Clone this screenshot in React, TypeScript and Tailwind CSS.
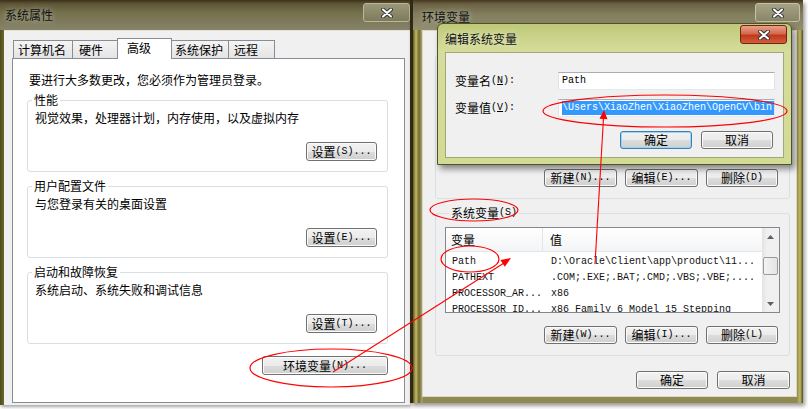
import React from "react";

function M({ children }: { children: React.ReactNode }) {
  return <span className="font-['Liberation_Mono',monospace] text-[10px] leading-none">{children}</span>;
}

function CloseGlyph() {
  return (
    <svg width="12" height="10" viewBox="0 0 12 10">
      <path d="M2 1.5l8 7M10 1.5l-8 7" stroke="#3a3a3a" strokeWidth="4" strokeLinecap="round" />
      <path d="M2 1.5l8 7M10 1.5l-8 7" stroke="#ffffff" strokeWidth="2" strokeLinecap="round" />
    </svg>
  );
}

function Btn({
  children,
  className = "",
  primary = false,
}: {
  children: React.ReactNode;
  className?: string;
  primary?: boolean;
}) {
  const skin = primary
    ? "border-[#3c7fb1] shadow-[inset_0_0_0_1px_#98d6f5]"
    : "border-[#707070] shadow-[inset_0_0_0_1px_#fbfbfb]";
  return (
    <div
      className={`flex items-center justify-center rounded-[3px] border bg-[linear-gradient(180deg,#f2f2f2,#ebebeb_50%,#dddddd_50%,#cfcfcf)] leading-none ${skin} ${className}`}
    >
      {children}
    </div>
  );
}

function Group({ label, className = "", children }: { label: React.ReactNode; className?: string; children: React.ReactNode }) {
  return (
    <fieldset className={`rounded-[3px] border border-[#d5dfe5] ${className}`}>
      <legend className="ml-[4px] flex h-[16px] items-center px-[2px] leading-[16px]">{label}</legend>
      {children}
    </fieldset>
  );
}

function SettingsGroup({ label, desc, btn, className }: { label: string; desc: string; btn: React.ReactNode; className: string }) {
  return (
    <Group label={label} className={className}>
      <p className="mt-[2px] pl-[7px] leading-[16px]">{desc}</p>
      <div className="mt-[16px] flex justify-end pr-[10px] pb-[10px]">
        <Btn className="h-[19px] w-[71px]">{btn}</Btn>
      </div>
    </Group>
  );
}

function SystemProps() {
  return (
    <div className="flex h-[405px] w-[410px] flex-col shadow-[1px_2px_3px_rgba(0,0,0,0.35)]">
      <div className="flex h-[30px] items-start justify-between bg-[linear-gradient(180deg,#3e2f18,#5e5737_4px,#76724f_14px,#868369)]">
        <span className="mt-[7px] pl-[5px] leading-[16px] text-[#111] [text-shadow:0_0_6px_rgba(255,255,255,0.55)]">系统属性</span>
        <div className="mt-[3px] flex h-[19px] w-[47px] items-center justify-center rounded-[3px] border border-[#b9b79b] bg-[linear-gradient(180deg,#9a977a,#7e7b5c)]">
          <CloseGlyph />
        </div>
      </div>
      <div className="flex flex-1">
        <div className="w-[4px] bg-[linear-gradient(90deg,#4d4b1a,#6b6a2c)]" />
        <div className="flex flex-1 flex-col border-t border-[#e4e3d6] bg-[#f0f0f0] pt-[7px] pr-[5px] pb-[2px] pl-[8px]">
          <div className="flex h-[20px] items-end">
            <div className="ml-[1px] flex h-[18px] w-[60px] items-center border border-b-0 border-[#898c95] bg-[linear-gradient(180deg,#f4f4f4,#e4e4e4)] pl-[4px] leading-[16px]">计算机名</div>
            <div className="-ml-px flex h-[18px] w-[47px] items-center border border-b-0 border-[#898c95] bg-[linear-gradient(180deg,#f4f4f4,#e4e4e4)] pl-[6px] leading-[16px]">硬件</div>
            <div className="relative z-10 -mb-px -ml-[2px] h-[21px] w-[55px] border border-b-0 border-[#898c95] bg-white pt-[1px] pl-[9px] leading-[16px]">高级</div>
            <div className="-ml-[2px] flex h-[18px] w-[59px] items-center border border-b-0 border-[#898c95] bg-[linear-gradient(180deg,#f4f4f4,#e4e4e4)] pl-[4px] leading-[16px]">系统保护</div>
            <div className="-ml-px flex h-[18px] w-[47px] items-center border border-b-0 border-[#898c95] bg-[linear-gradient(180deg,#f4f4f4,#e4e4e4)] pl-[5px] leading-[16px]">远程</div>
          </div>
          <div className="flex flex-1 flex-col border border-[#898c95] bg-white pt-[13px] pr-[16px] pl-[14px]">
            <p className="pl-[2px] leading-[16px]">要进行大多数更改，您必须作为管理员登录。</p>
            <SettingsGroup
              className="mt-[4px]"
              label="性能"
              desc="视觉效果，处理器计划，内存使用，以及虚拟内存"
              btn={<>设置<M>(S)...</M></>}
            />
            <SettingsGroup
              className="mt-[6px]"
              label="用户配置文件"
              desc="与您登录有关的桌面设置"
              btn={<>设置<M>(E)...</M></>}
            />
            <SettingsGroup
              className="mt-[6px]"
              label="启动和故障恢复"
              desc="系统启动、系统失败和调试信息"
              btn={<>设置<M>(T)...</M></>}
            />
            <div className="mt-[12px] flex justify-end">
              <Btn className="h-[19px] w-[126px]">环境变量<M>(N)...</M></Btn>
            </div>
          </div>
        </div>
      </div>
    </div>
  );
}

const sysRows = [
  ["Path", "D:\\Oracle\\Client\\app\\product\\11..."],
  ["PATHEXT", ".COM;.EXE;.BAT;.CMD;.VBS;.VBE;...."],
  ["PROCESSOR_AR...", "x86"],
  ["PROCESSOR_ID...", "x86 Family 6 Model 15 Stepping"],
];

function VarList({ rows }: { rows: string[][] }) {
  return (
    <div className="mt-[6px] flex h-[86px] border border-[#828790] bg-white">
      <div className="flex-1 overflow-hidden">
        <div className="flex h-[24px] items-center border-b border-[#e5e5e5] bg-[linear-gradient(180deg,#ffffff,#f3f4f6)]">
          <div className="flex h-full w-[97px] items-center border-r border-[#e5e5e5] pl-[5px] leading-[16px]">变量</div>
          <div className="pl-[7px] leading-[16px]">值</div>
        </div>
        <div className="pt-[2px]">
          {rows.map(([k, v]) => (
            <div key={k} className="flex h-[16px] items-center font-['Liberation_Mono',monospace] text-[10px] leading-[16px] text-[#111]">
              <div className="w-[97px] pl-[6px] whitespace-nowrap">{k}</div>
              <div className="pl-[8px] whitespace-nowrap">{v}</div>
            </div>
          ))}
        </div>
      </div>
      <div className="flex w-[17px] flex-col bg-[linear-gradient(90deg,#e3e3e3,#f0f0f0_30%,#f0f0f0)]">
        <div className="flex h-[17px] items-center justify-center">
          <svg width="7" height="4" viewBox="0 0 7 4"><path d="M0 4L3.5 0L7 4z" fill="#606060" /></svg>
        </div>
        {rows.length > 0 && (
          <div className="mx-[1px] mt-[12px] h-[18px] rounded-[2px] border border-[#9a9a9a] bg-[linear-gradient(90deg,#f3f3f3,#e4e4e4)]" />
        )}
        <div className="flex-1" />
        <div className="flex h-[17px] items-center justify-center">
          <svg width="7" height="4" viewBox="0 0 7 4"><path d="M0 0L3.5 4L7 0z" fill="#606060" /></svg>
        </div>
      </div>
    </div>
  );
}

function VarGroup({ label, rows, btns, className }: { label: React.ReactNode; rows: string[][]; btns: React.ReactNode[]; className: string }) {
  return (
    <Group label={label} className={`px-[9px] pb-[11px] ${className}`}>
      <VarList rows={rows} />
      <div className="mt-[13px] mr-[2px] flex justify-end gap-[8px]">
        <Btn className="h-[18px] w-[73px]">{btns[0]}</Btn>
        <Btn className="h-[18px] w-[73px]">{btns[1]}</Btn>
        <Btn className="h-[18px] w-[72px]">{btns[2]}</Btn>
      </div>
    </Group>
  );
}

function EditDialog() {
  return (
    <div className="absolute top-[23px] left-[24px] flex h-[142px] w-[355px] flex-col rounded-t-[6px] border border-[#4f5328] bg-[linear-gradient(180deg,#bfc978,#d6dd9c_28px,#d2da94)] shadow-[3px_4px_6px_rgba(0,0,0,0.45)]">
      <div className="flex h-[28px] items-start justify-between">
        <span className="mt-[7px] pl-[7px] leading-[16px] text-[#111] [text-shadow:0_0_6px_rgba(255,255,255,0.7)]">编辑系统变量</span>
        <div className="mt-[1px] mr-[4px] flex h-[19px] w-[47px] items-center justify-center rounded-[3px] border border-[#6e2416] bg-[linear-gradient(180deg,#e9a08c,#d46a4e_45%,#c0391c_55%,#d75d3a)]">
          <CloseGlyph />
        </div>
      </div>
      <div className="mx-[7px] mb-[6px] flex flex-1 flex-col border border-[#a2a873] bg-[#f0f0f0] pt-[19px] pr-[8px] pl-[9px]">
        <div className="flex h-[18px] items-center">
          <div className="flex w-[103px] items-center leading-[16px]">变量名<M>(<u>N</u>):</M></div>
          <div className="flex h-[18px] flex-1 items-center border border-[#abadb3] border-x-[#e2e3ea] border-b-[#e3e9ef] bg-white pl-[3px]">
            <M>Path</M>
          </div>
        </div>
        <div className="mt-[9px] flex h-[18px] items-center">
          <div className="flex w-[103px] items-center leading-[16px]">变量值<M>(<u>V</u>):</M></div>
          <div className="flex h-[18px] flex-1 items-center overflow-hidden border border-[#abadb3] border-x-[#e2e3ea] border-b-[#e3e9ef] bg-white pl-[3px]">
            <span className="flex h-[14px] flex-1 items-center bg-[#3399ff] whitespace-nowrap text-white">
              <M>\Users\XiaoZhen\XiaoZhen\OpenCV\bin</M>
            </span>
          </div>
        </div>
        <div className="mt-[14px] mr-[2px] flex justify-end gap-[9px]">
          <Btn primary className="h-[18px] w-[72px]">确定</Btn>
          <Btn className="h-[18px] w-[72px]">取消</Btn>
        </div>
      </div>
    </div>
  );
}

function EnvVars() {
  return (
    <div className="relative flex h-[403px] w-[393px] flex-col border-l-[3px] border-[#2f2a16] shadow-[2px_3px_4px_rgba(0,0,0,0.4)]">
      <div className="flex h-[30px] items-start justify-between bg-[linear-gradient(180deg,#46361e,#6a6244_4px,#827d5c_14px,#948f72)]">
        <span className="mt-[9px] pl-[9px] leading-[16px] text-[#111] [text-shadow:0_0_6px_rgba(255,255,255,0.55)]">环境变量</span>
        <div className="mt-[3px] mr-[3px] flex h-[19px] w-[45px] items-center justify-center rounded-[3px] border border-[#c3c1a6] bg-[linear-gradient(180deg,#a4a185,#8a8768)]">
          <CloseGlyph />
        </div>
      </div>
      <div className="flex flex-1 bg-[linear-gradient(90deg,#5a5520,#c4b964_3px,#6f6a2c_6px,#a9a478_9px,#8f8a52_10px,#8f8a52_calc(100%-6px),#c4b964_calc(100%-3px),#4f4a1c)] pr-[6px] pb-[6px] pl-[9px]">
        <div className="flex flex-1 flex-col border border-[#dcd9bd] bg-[#f0f0f0] pt-[17px] pr-[6px] pl-[12px]">
          <VarGroup
            className=""
            label={<>用户变量<M>(U)</M></>}
            rows={[]}
            btns={[<>新建<M>(N)...</M></>, <>编辑<M>(E)...</M></>, <>删除<M>(D)</M></>]}
          />
          <VarGroup
            className="mt-[6px]"
            label={<>系统变量<M>(S)</M></>}
            rows={sysRows}
            btns={[<>新建<M>(W)...</M></>, <>编辑<M>(I)...</M></>, <>删除<M>(L)</M></>]}
          />
          <div className="mt-[15px] flex justify-end gap-[9px]">
            <Btn className="h-[18px] w-[72px]">确定</Btn>
            <Btn className="h-[18px] w-[73px]">取消</Btn>
          </div>
        </div>
      </div>
      <EditDialog />
    </div>
  );
}

export default function App() {
  return (
    <div className="relative flex h-[409px] w-[808px] overflow-hidden bg-white font-['Noto_Sans_CJK_SC',sans-serif] text-[12px] text-black">
      <SystemProps />
      <EnvVars />
      <svg className="pointer-events-none absolute inset-0" width="808" height="409" viewBox="0 0 808 409" fill="none">
        <ellipse cx="331" cy="368" rx="81" ry="19" stroke="#ff0000" strokeWidth="1.2" />
        <ellipse cx="470" cy="259" rx="29" ry="13" stroke="#ff0000" strokeWidth="1.2" />
        <ellipse cx="474" cy="210" rx="44" ry="11" stroke="#ff0000" strokeWidth="1.2" />
        <ellipse cx="665" cy="111" rx="122" ry="16" stroke="#ff0000" strokeWidth="1.2" />
        <line x1="333" y1="372" x2="504" y2="263" stroke="#ff0000" strokeWidth="1.1" />
        <polygon points="511,258 504.8,266.8 500.4,260" fill="#ff0000" />
        <line x1="595" y1="264" x2="603.5" y2="118" stroke="#ff0000" strokeWidth="1.1" />
        <polygon points="604,110 607.5,119.2 599.5,118.8" fill="#ff0000" />
      </svg>
    </div>
  );
}
